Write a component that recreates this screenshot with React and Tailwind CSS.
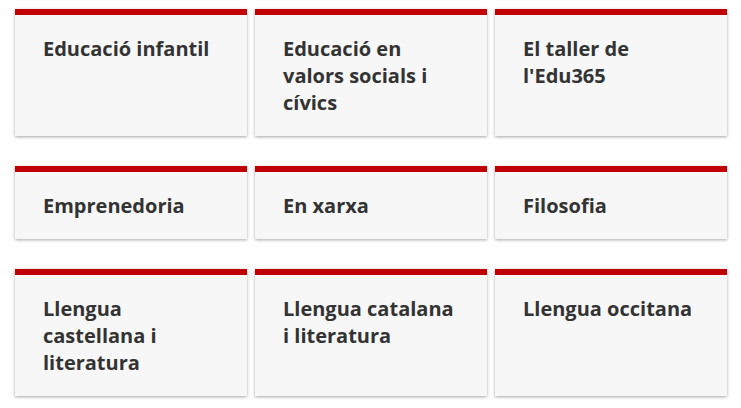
import React from "react";

const items = [
  "Educació infantil",
  "Educació en valors socials i cívics",
  "El taller de l'Edu365",
  "Emprenedoria",
  "En xarxa",
  "Filosofia",
  "Llengua castellana i literatura",
  "Llengua catalana i literatura",
  "Llengua occitana",
];

export default function App() {
  return (
    <div className="w-[741px] h-[408px] bg-white pt-[9px] px-[14px]" style={{ fontFamily: '"Open Sans", sans-serif' }}>
      <div className="grid grid-cols-3 gap-x-[8px] gap-y-[30px] w-[712px] ml-[1px]">
        {items.map((t) => (
          <div
            key={t}
            className="bg-[#f7f7f7] border-t-[6px] border-[#c00000] px-[28px] py-[20px] shadow-[0_1px_3px_rgba(0,0,0,0.35)]"
          >
            <div className="text-[20px] leading-[27px] font-bold text-[#333333]">{t}</div>
          </div>
        ))}
      </div>
    </div>
  );
}
